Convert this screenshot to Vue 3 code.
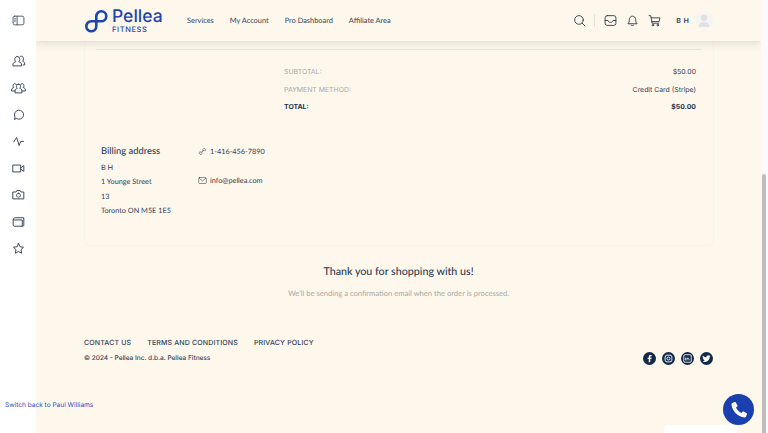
<script setup>
const sideIcons = [
  { id: 'user', paths: ['M10 4c2.500 0 4 2 4 4.500 0 1.700-.7 3-1.700 3.800 2.500.8 4.700 2 4.700 5.200V19H3v-1.500c0-3.200 2.200-4.400 4.700-5.200C6.700 11.500 6 10.200 6 8.500 6 6 7.500 4 10 4z', 'M14.500 4.200c.6-.4 1.200-.7 2-.7 2.300 0 3.500 2 3.500 4.200 0 1.700-.6 3-1.600 3.800 2 .7 3.600 1.900 3.600 4.500v1.500h-2.500'] },
  { id: 'group', paths: ['M12 5c2 0 3.300 1.600 3.300 3.700 0 1.300-.5 2.400-1.300 3.100 2 .7 3.500 1.700 3.500 4.200V19h-11v-3c0-2.500 1.500-3.500 3.500-4.200-.8-.7-1.300-1.800-1.300-3.100C8.700 6.600 10 5 12 5z', 'M8.700 6C8.200 5 7.300 4.200 6.200 4.200 4.500 4.200 3.300 5.700 3.300 7.500c0 1.200.4 2.100 1.100 2.800C2.500 11 1 12 1 14.500V16h5', 'M15.300 6c.5-1 1.400-1.800 2.500-1.800 1.700 0 2.900 1.500 2.900 3.300 0 1.200-.4 2.100-1.100 2.800 1.900.7 3.400 1.700 3.400 4.200V16h-5'] },
  { id: 'chat', paths: ['M5.500 19.500l1-3.500A7.300 7.300 0 1 1 9 18.600z'] },
  { id: 'pulse', paths: ['M4.500 12.500 9 5.500l4 13 2.500-6.500h4.500'] },
  { id: 'video', paths: ['M3.500 6.500h12v11h-12z', 'M15.500 11l5-3.500v9l-5-3.500z'] },
  { id: 'camera', paths: ['M3.500 8h4.500l1.500-2.500h5L16 8h4.500v11h-17z', 'M12 10a3.200 3.200 0 1 0 .01 0z'] },
  { id: 'folder', paths: ['M3.500 9.500C3.500 7 5 6 7 6h13.500v12c0 1-.8 1.500-1.500 1.500H5c-1 0-1.500-.7-1.500-1.500z', 'M3.500 9.500h14.500v10'] },
  { id: 'star', paths: ['M12 4l2.500 5.200 5.500.8-4 3.900 1 5.600-5-2.700-5 2.700 1-5.600-4-3.900 5.500-.8z'] },
]
const socials = ['facebook', 'instagram', 'linkedin', 'twitter']
</script>

<template>
  <div class="page">
    <aside class="sidebar">
      <button class="toggle" aria-label="Toggle sidebar">
        <svg viewBox="0 0 24 24" width="13" height="13" class="ico">
          <rect x="2" y="4" width="20" height="16" rx="3" />
          <path d="M9.500 4v16M4.500 9h2.500M4.500 13h2.500" />
        </svg>
      </button>
      <nav class="side-nav">
        <span v-for="icon in sideIcons" :key="icon.id" class="side-item">
          <svg viewBox="0 0 24 24" width="15" height="15" class="ico">
            <path v-for="d in icon.paths" :key="d" :d="d" />
          </svg>
        </span>
      </nav>
      <a class="switch-back">Switch back to Paul Williams</a>
    </aside>

    <div class="main">
      <header class="header">
        <div class="brand">
          <svg viewBox="0 0 24 24" width="24" height="24" class="logo-mark">
            <path d="M12.300 12.300V7.300A5 5 0 1 1 17.300 12.300H7.300A5 5 0 1 0 12.300 17.300V12.300" />
          </svg>
          <div class="brand-text">
            <span class="brand-name">Pellea</span>
            <span class="brand-sub">FITNESS</span>
          </div>
        </div>
        <nav class="top-nav">
          <a>Services</a>
          <a>My Account</a>
          <a>Pro Dashboard</a>
          <a>Affiliate Area</a>
        </nav>
        <div class="tools">
          <svg viewBox="0 0 24 24" width="13" height="13" class="ico dark">
            <circle cx="11" cy="11" r="8" />
            <path d="M17 17l5 5" />
          </svg>
          <span class="divider"></span>
          <svg viewBox="0 0 24 24" width="13" height="13" class="ico dark">
            <rect x="2" y="3" width="20" height="18" rx="4" />
            <path d="M2 12h5.500c1 3 2.500 3.500 4.500 3.500s3.500-.5 4.500-3.500H22" />
          </svg>
          <svg viewBox="0 0 24 24" width="13" height="13" class="ico dark bell">
            <path d="M4 17.500c1.500-1.500 2-3 2-6.500 0-4 2.500-7 6-7s6 3 6 7c0 3.500.5 5 2 6.500z" />
            <path d="M9.500 20.500c1 1.500 4 1.500 5 0" />
          </svg>
          <svg viewBox="0 0 24 24" width="13" height="13" class="ico dark cart">
            <path d="M2 3h3l2.500 14H20" />
            <path d="M6 7h16l-1.500 7H7.300" />
            <circle cx="9" cy="20.500" r="1.500" />
            <circle cx="18" cy="20.500" r="1.500" />
          </svg>
          <span class="initials">B H</span>
          <span class="avatar">
            <svg viewBox="0 0 18 18" width="18" height="18">
              <circle cx="9" cy="6" r="3.200" fill="#e1e2e3" />
              <path d="M3.500 15c0-3.500 2.500-5 5.500-5s5.500 1.500 5.500 5z" fill="#e1e2e3" />
            </svg>
          </span>
        </div>
      </header>

      <main class="content">
        <section class="card">
          <div class="rule"></div>
          <div class="totals">
            <div class="total-row"><span class="label">SUBTOTAL:</span><span class="value">$50.00</span></div>
            <div class="total-row"><span class="label">PAYMENT METHOD:</span><span class="value">Credit Card (Stripe)</span></div>
            <div class="total-row strong"><span class="label">TOTAL:</span><span class="value">$50.00</span></div>
          </div>
          <div class="billing">
            <div class="address">
              <h3>Billing address</h3>
              <p>B H</p>
              <p>1 Younge Street</p>
              <p>13</p>
              <p>Toronto ON M5E 1E5</p>
            </div>
            <div class="contact">
              <div class="contact-row">
                <svg viewBox="0 0 24 24" width="9" height="9" class="ico">
                  <path d="M3 16.500l4.500 4.500 3.500-3.500-2-2 6.500-6.500 2 2 3.500-3.500L16.500 3 13 6.500l1.500 1.500L8 14.500l-1.500-1.500z" />
                </svg>
                <span>1-416-456-7890</span>
              </div>
              <div class="contact-row">
                <svg viewBox="0 0 24 24" width="9" height="9" class="ico">
                  <rect x="2" y="4" width="20" height="16" rx="2" />
                  <path d="M3 6l9 7 9-7" />
                </svg>
                <span>info@pellea.com</span>
              </div>
            </div>
          </div>
        </section>

        <section class="thanks">
          <h2>Thank you for shopping with us!</h2>
          <p>We'll be sending a confirmation email when the order is processed.</p>
        </section>

        <footer class="footer">
          <div class="foot-left">
            <div class="foot-links">
              <a>CONTACT US</a>
              <a>TERMS AND CONDITIONS</a>
              <a>PRIVACY POLICY</a>
            </div>
            <div class="copyright">© 2024 - Pellea Inc. d.b.a. Pellea Fitness</div>
          </div>
          <div class="socials">
            <span v-for="s in socials" :key="s" class="social">
              <svg viewBox="0 0 12 12" width="9" height="9">
                <path v-if="s === 'facebook'" d="M7 11V6.800h1.500L8.800 5H7V4c0-.6.200-1 1-1h.9V1.300C8.500 1.200 8 1.200 7.500 1.200 6 1.200 5 2.100 5 3.700V5H3.500v1.800H5V11z" fill="#fff" />
                <g v-else-if="s === 'instagram'" fill="none" stroke="#fff" stroke-width="1.200">
                  <rect x="1.500" y="1.500" width="9" height="9" rx="2.500" />
                  <circle cx="6" cy="6" r="2" />
                </g>
                <g v-else-if="s === 'linkedin'">
                  <rect x="1" y="1" width="10" height="10" rx="1.500" fill="none" stroke="#fff" stroke-width="1.100" />
                  <path d="M3.300 5v3.500M5.300 8.500V5M5.300 6.500c.3-1.400 2.700-1.400 2.700.3v1.700" fill="none" stroke="#fff" stroke-width="1" />
                </g>
                <path v-else d="M11.500 2.600c-.4.200-.8.300-1.300.4.500-.3.800-.7 1-1.300-.4.300-.9.500-1.400.6a2.300 2.300 0 0 0-3.900 2.100C4 4.300 2.300 3.400 1.200 2c-.6 1-.3 2.300.7 3-.4 0-.7-.1-1-.3 0 1.100.8 2 1.800 2.300-.3.100-.7.100-1 0 .3.900 1.100 1.500 2.100 1.600-.9.700-2 1-3.300.9 1 .7 2.200 1 3.400 1 4.100 0 6.500-3.500 6.300-6.600.5-.3.900-.8 1.300-1.300z" fill="#fff" />
              </svg>
            </span>
          </div>
        </footer>
      </main>
    </div>

    <div class="scrollbar"><div class="thumb"></div></div>

    <div class="call">
      <svg viewBox="0 0 24 24" width="20" height="20">
        <path d="M6.600 2.500c.6-.3 1.200-.1 1.500.4l2 3.300c.3.500.2 1.100-.2 1.500L8.400 9.100c1.100 2.700 3.700 5.300 6.500 6.500l1.400-1.500c.4-.4 1-.5 1.500-.2l3.300 2c.5.300.7.900.4 1.500l-1.200 2.600c-.3.700-1 1.100-1.800 1C10.500 20.200 3.800 13.500 3 5.500c-.1-.8.300-1.500 1-1.800z" fill="#fff" />
      </svg>
    </div>
    <div class="chat-peek"></div>
  </div>
</template>

<style>
html, body { margin: 0; overflow: hidden; }
</style>

<style scoped>
.page {
  position: relative;
  display: flex;
  width: 768px;
  height: 433px;
  overflow: hidden;
  background: #fef7ec;
  font-family: Lato, "Liberation Sans", sans-serif;
  text-rendering: geometricPrecision;
  color: #2f3c52;
}
.ico { fill: none; stroke: #3d4a5f; stroke-width: 1.600; stroke-linecap: round; stroke-linejoin: round; display: block; }
.ico.dark { stroke: #26334a; }

.sidebar {
  position: relative;
  flex: 0 0 36px;
  background: #fff;
  display: flex;
  flex-direction: column;
  align-items: center;
  z-index: 3;
  box-sizing: border-box;
  padding-top: 14px;
}
.toggle { border: 0; background: none; padding: 0; display: block; height: 13px; }
.side-nav { display: flex; flex-direction: column; align-items: center; margin-top: 21px; }
.side-item { display: flex; height: 26.700px; align-items: center; }
.switch-back {
  position: absolute;
  left: 5px;
  top: 400px;
  font-family: Inter, sans-serif;
  font-size: 6.550px;
  line-height: 10px;
  white-space: nowrap;
  color: #2a4fc4;
}

.main { flex: 1; min-width: 0; display: flex; flex-direction: column; }
.header {
  flex: 0 0 41px;
  display: flex;
  align-items: center;
  padding: 0 48px 0 48px;
  background: #fef7ec;
  box-shadow: 0 2px 8px rgba(60, 60, 60, 0.16);
  position: relative;
  z-index: 2;
}
.brand { display: flex; align-items: center; gap: 4px; width: 103px; }
.logo-mark { fill: none; stroke: #1c46ae; stroke-width: 2.600; stroke-linecap: round; stroke-linejoin: round; }
.brand-text { display: flex; flex-direction: column; font-family: Inter, sans-serif; }
.brand-name { font-size: 17.500px; font-weight: 500; line-height: 17px; color: #1c46ae; }
.brand-sub { font-size: 7.500px; font-weight: 500; letter-spacing: .6px; line-height: 9px; color: #1c46ae; }
.top-nav { display: flex; gap: 16px; font-size: 7.400px; color: #33405a; white-space: nowrap; }
.tools { margin-left: auto; display: flex; align-items: center; }
.divider { width: 1px; height: 13px; background: #e3e1db; margin: 0 9px 0 8px; }
.bell { margin-left: 9px; }
.cart { margin-left: 9px; }
.initials { font-size: 7px; font-weight: 700; letter-spacing: .5px; color: #33405a; margin-left: 15.500px; }
.avatar {
  width: 18px;
  height: 18px;
  border-radius: 50%;
  background: #f5f5f4;
  margin-left: 5.500px;
  display: block;
}

.content { flex: 1; min-height: 0; padding: 0 48px 0 48px; }
.card {
  border: 1px solid #f9f4ea;
  border-top: 0;
  border-radius: 0 0 6px 6px;
  padding: 8px 11px 0;
  height: 205px;
  box-sizing: border-box;
  margin-right: -1px;
}
.rule { height: 1px; background: #e9e6dd; }
.totals { margin: 13px 6px 0 188px; font-family: Inter, sans-serif; font-size: 6.900px; }
.total-row { display: flex; justify-content: space-between; height: 17.500px; align-items: center; }
.label { color: #a9a9a6; }
.value { color: #33405a; }
.total-row.strong .label, .total-row.strong .value { color: #26334a; font-weight: 700; }
.billing { display: flex; margin: 28px 0 0 5px; font-size: 7.300px; }
.address { width: 97px; }
.address h3 { margin: 0 0 2px; font-size: 9.400px; font-weight: 500; line-height: 15px; color: #33405a; }
.address p { margin: 0; line-height: 14.500px; color: #33405a; }
.contact { padding-top: 3px; display: flex; flex-direction: column; gap: 19px; }
.contact-row { display: flex; align-items: center; gap: 3px; line-height: 10px; color: #33405a; }

.thanks { text-align: center; margin-top: 18px; }
.thanks h2 { margin: 0; font-size: 10.700px; font-weight: 500; line-height: 16px; color: #2f3c52; }
.thanks p { margin: 8px 0 0; font-size: 7.600px; line-height: 10px; color: #a9a9a6; }

.footer { display: flex; align-items: flex-end; justify-content: space-between; margin-top: 40px; font-family: Inter, sans-serif; }
.foot-links { display: flex; gap: 16px; font-size: 7px; font-weight: 500; letter-spacing: .15px; line-height: 10px; color: #33405a; }
.copyright { margin-top: 5px; font-size: 6.500px; line-height: 10px; font-weight: 500; color: #33405a; }
.socials { display: flex; gap: 6px; margin-bottom: -2px; }
.social {
  width: 13px;
  height: 13px;
  border-radius: 50%;
  background: #12294a;
  display: flex;
  align-items: center;
  justify-content: center;
}

.scrollbar { flex: 0 0 7px; background: #fafafa; position: relative; z-index: 3; }
.thumb { position: absolute; right: 2px; left: 1px; top: 174px; bottom: 0; background: #bdbdbd; border-radius: 2px 2px 0 0; }

.call {
  position: absolute;
  left: 723px;
  top: 394px;
  width: 31px;
  height: 31px;
  border-radius: 50%;
  background: #1a3fae;
  display: flex;
  align-items: center;
  justify-content: center;
  z-index: 4;
}
.chat-peek {
  position: absolute;
  left: 664px;
  top: 425px;
  width: 74px;
  height: 20px;
  border-radius: 5px;
  background: #fff;
  z-index: 4;
}
</style>
